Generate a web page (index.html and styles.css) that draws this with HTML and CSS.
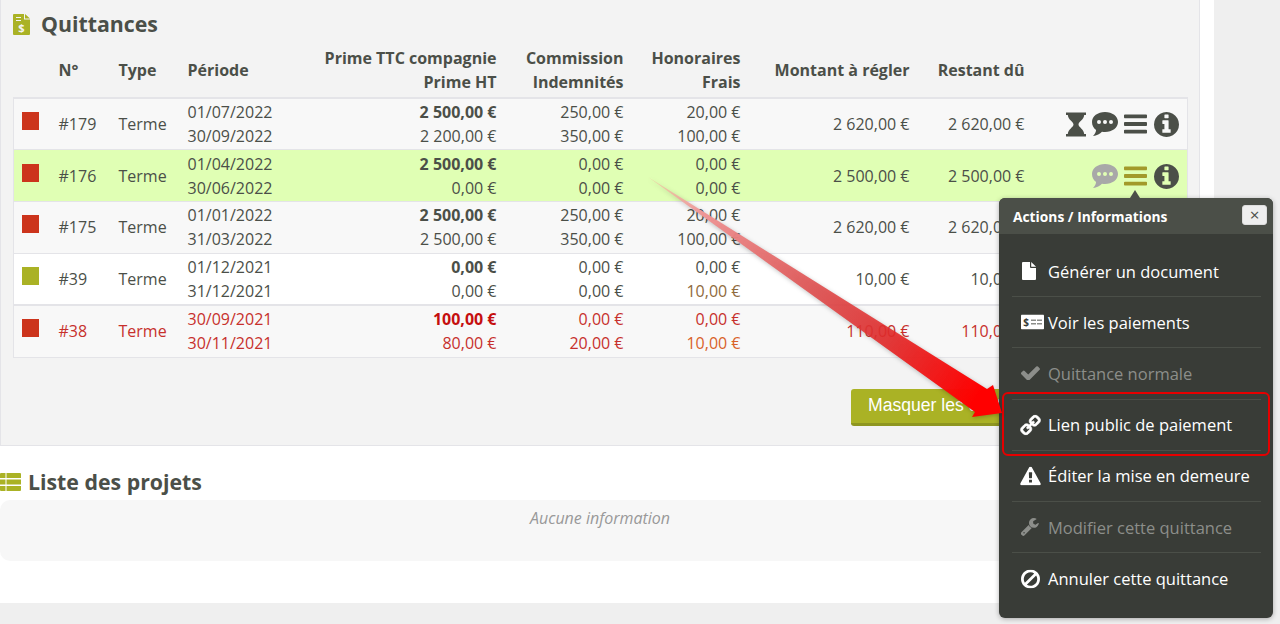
FILE: index.html
```html
<!DOCTYPE html>
<html lang="fr">

<head>
  <meta charset="UTF-8">
  <meta name="viewport" content="width=device-width, initial-scale=1.0">
  <title>Quittances</title>
  <link rel="stylesheet" href="styles.css">
</head>

<body>
  <svg class="sprite" xmlns="http://www.w3.org/2000/svg">
    <symbol id="i-bars" viewBox="128 256 1536 1280"><path d="M1664 1344v128q0 26-19 45t-45 19H192q-26 0-45-19t-19-45v-128q0-26 19-45t45-19h1408q26 0 45 19t19 45zm0-512v128q0 26-19 45t-45 19H192q-26 0-45-19t-19-45V832q0-26 19-45t45-19h1408q26 0 45 19t19 45zm0-512v128q0 26-19 45t-45 19H192q-26 0-45-19t-19-45V320q0-26 19-45t45-19h1408q26 0 45 19t19 45z"/></symbol>
    <symbol id="i-info" viewBox="128 128 1536 1536"><path d="M1152 1376v-160q0-14-9-23t-23-9h-96V672q0-14-9-23t-23-9H672q-14 0-23 9t-9 23v160q0 14 9 23t23 9h96v320h-96q-14 0-23 9t-9 23v160q0 14 9 23t23 9h448q14 0 23-9t9-23zm-128-896V320q0-14-9-23t-23-9H800q-14 0-23 9t-9 23v160q0 14 9 23t23 9h192q14 0 23-9t9-23zm640 416q0 209-103 385.5T1281.5 1561 896 1664t-385.5-103T231 1281.5 128 896t103-385.5T510.5 231 896 128t385.5 103T1561 510.5 1664 896z"/></symbol>
    <symbol id="i-hourglass" viewBox="0 0 20 24"><path d="M0 0h20v2.500h-1.800c-.4 5-5.700 6.800-5.700 9.500s5.300 4.500 5.700 9.500H20V24H0v-2.500h1.800c.4-5 5.700-6.800 5.700-9.500S2.200 7.500 1.800 2.500H0z"/></symbol>
    <symbol id="i-comment" viewBox="0 0 26 24"><path fill-rule="evenodd" d="M13 0c7.200 0 13 4.300 13 10s-5.800 10-13 10c-1 0-2-.1-3-.3C8 21.600 5 23.500 .8 24c1.600-1.500 3-3.300 3.300-6.100C1.500 16.200 0 13.300 0 10 0 4.300 5.800 0 13 0zM7 8.100a2 2 0 1 0 0 4 2 2 0 0 0 0-4zm6 0a2 2 0 1 0 0 4 2 2 0 0 0 0-4zm6 0a2 2 0 1 0 0 4 2 2 0 0 0 0-4z"/></symbol>
    <symbol id="i-file" viewBox="0 0 14 18"><path d="M0 1a1 1 0 0 1 1-1h7v5a1 1 0 0 0 1 1h5v11a1 1 0 0 1-1 1H1a1 1 0 0 1-1-1zM9.200 0c.2.100.4.200.5.400l3.900 3.900c.2.100.3.300.4.500H9.200z"/></symbol>
    <symbol id="i-check" viewBox="128 320 1543 1142"><path d="M1671 566q0 40-28 68l-724 724-136 136q-28 28-68 28t-68-28l-136-136-362-362q-28-28-28-68t28-68l136-136q28-28 68-28t68 28l294 295 656-657q28-28 68-28t68 28l136 136q28 28 28 68z"/></symbol>
    <symbol id="i-link" viewBox="40 -24 1712 1712"><path stroke="#fff" stroke-width="50" d="M1520 1216q0-40-28-68l-208-208q-28-28-68-28-42 0-72 32 3 3 19 18.500t21.500 21.500 15 19 13 25.500 3.500 27.500q0 40-28 68t-68 28q-15 0-27.500-3.500t-25.500-13-19-15-21.500-21.500-18.500-19q-33 31-33 73 0 40 28 68l206 207q27 27 68 27 40 0 68-26l147-146q28-28 28-67zM817 511q0-40-28-68L583 236q-28-28-68-28-39 0-68 27L300 381q-28 28-28 67 0 40 28 68l208 208q27 27 68 27 42 0 72-31-3-3-19-18.500T607.500 680t-15-19-13-25.500T576 608q0-40 28-68t68-28q15 0 27.500 3.500t25.500 13 19 15 21.500 21.500 18.500 19q33-31 33-73zm895 705q0 120-85 203l-147 146q-83 83-203 83-121 0-204-85l-206-207q-83-83-83-203 0-123 88-209l-88-88q-86 88-208 88-120 0-204-84L164 652q-84-84-84-204t85-203L312 99q83-83 203-83 121 0 204 85l206 207q83 83 83 203 0 123-88 209l88 88q86-88 208-88 120 0 204 84l208 208q84 84 84 204z"/></symbol>
    <symbol id="i-warning" viewBox="0 0 1792 1664"><path d="M1024 1375v-190q0-14-9.500-23.500T992 1152H800q-13 0-22.500 9.500T768 1185v190q0 14 9.500 23.500t22.500 9.500h192q13 0 22.500-9.500t9.500-23.500zm-2-374l18-459q0-12-10-19-13-11-24-11H786q-11 0-24 11-10 7-10 21l17 457q0 10 10 16.500t24 6.500h185q14 0 23.500-6.500t10.500-16.500zm-14-934l768 1408q35 63-2 126-17 29-46.500 46t-63.500 17H128q-34 0-63.500-17T18 1601q-37-63-2-126L784 67q17-31 47-49t65-18 65 18 47 49z"/></symbol>
    <symbol id="i-wrench" viewBox="128 128 1598 1643"><path d="M448 1472q0-26-19-45t-45-19-45 19-19 45 19 45 45 19 45-19 19-45zm644-420l-682 682q-37 37-90 37-52 0-91-37l-106-108q-38-36-38-90 0-53 38-91l681-681q39 98 114.500 173.500T1092 1052zm634-435q0 39-23 106-47 134-164.500 217.500T1280 1024q-185 0-316.500-131.500T832 576t131.500-316.500T1280 128q58 0 121.500 16.500T1509 191q16 11 16 28t-16 28l-293 169v224l193 107q5-3 79-48.500t135.500-81 70.500-35.500q15 0 23.500 10t8.500 25z"/></symbol>
    <symbol id="i-ban" viewBox="128 123 1536 1536"><path d="M1440 893q0-161-87-295l-754 753q137 89 297 89 111 0 211.500-43.500T1281 1280t116-174.500 43-212.500zm-999 299l755-754q-135-91-300-91-148 0-273 73T425 619.500 352 893q0 162 89 299zm1223-299q0 157-61 300t-163.500 246-245 164-298.500 61-298.500-61-245-164T189 1193t-61-300 61-299.500T352.500 348t245-164T896 123t298.500 61 245 164T1603 593.500t61 299.500z"/></symbol>
  </svg>

  <div class="page">
    <section class="panel">
      <h2 class="title">
        <svg class="title-icon" viewBox="0 0 17 21">
          <path fill="#aab225" d="M1 0h10v5.500h6V20a1 1 0 0 1-1 1H1a1 1 0 0 1-1-1V1a1 1 0 0 1 1-1zM12 0l5 4.500h-5z"/>
          <path fill="#f3f3f3" d="M3 3h5v1H3zM3 6h5v1H3z"/>
          <text x="8.500" y="18" class="title-icon-sign">$</text>
        </svg>
        Quittances
      </h2>

      <table class="bills">
        <colgroup>
          <col class="col-state">
          <col class="col-num">
          <col class="col-type">
          <col class="col-period">
          <col class="col-prime">
          <col class="col-comm">
          <col class="col-fees">
          <col class="col-amount">
          <col class="col-due">
          <col>
        </colgroup>
        <thead>
          <tr>
            <th></th>
            <th>N°</th>
            <th>Type</th>
            <th>Période</th>
            <th class="num">Prime TTC compagnie<br>Prime HT</th>
            <th class="num">Commission<br>Indemnités</th>
            <th class="num">Honoraires<br>Frais</th>
            <th class="num">Montant à régler</th>
            <th class="num">Restant dû</th>
            <th></th>
          </tr>
        </thead>
        <tbody>
          <tr class="row-grey row-first">
            <td class="state"><span class="swatch swatch-red"></span></td>
            <td>#179</td>
            <td>Terme</td>
            <td>01/07/2022<br>30/09/2022</td>
            <td class="num"><b>2 500,00 €</b><br>2 200,00 €</td>
            <td class="num">250,00 €<br>350,00 €</td>
            <td class="num">20,00 €<br>100,00 €</td>
            <td class="num">2 620,00 €</td>
            <td class="num">2 620,00 €</td>
            <td>
              <div class="actions">
                <svg class="ico ico-hourglass"><use href="#i-hourglass"/></svg>
                <svg class="ico ico-comment"><use href="#i-comment"/></svg>
                <svg class="ico ico-bars"><use href="#i-bars"/></svg>
                <svg class="ico ico-info"><use href="#i-info"/></svg>
              </div>
            </td>
          </tr>
          <tr class="row-active">
            <td class="state"><span class="swatch swatch-red"></span></td>
            <td>#176</td>
            <td>Terme</td>
            <td>01/04/2022<br>30/06/2022</td>
            <td class="num"><b>2 500,00 €</b><br>0,00 €</td>
            <td class="num">0,00 €<br>0,00 €</td>
            <td class="num">0,00 €<br>0,00 €</td>
            <td class="num">2 500,00 €</td>
            <td class="num">2 500,00 €</td>
            <td>
              <div class="actions">
                <svg class="ico ico-comment is-muted"><use href="#i-comment"/></svg>
                <svg class="ico ico-bars is-open"><use href="#i-bars"/></svg>
                <svg class="ico ico-info"><use href="#i-info"/></svg>
              </div>
            </td>
          </tr>
          <tr class="row-grey">
            <td class="state"><span class="swatch swatch-red"></span></td>
            <td>#175</td>
            <td>Terme</td>
            <td>01/01/2022<br>31/03/2022</td>
            <td class="num"><b>2 500,00 €</b><br>2 500,00 €</td>
            <td class="num">250,00 €<br>350,00 €</td>
            <td class="num">20,00 €<br>100,00 €</td>
            <td class="num">2 620,00 €</td>
            <td class="num">2 620,00 €</td>
            <td></td>
          </tr>
          <tr class="row-white">
            <td class="state"><span class="swatch swatch-green"></span></td>
            <td>#39</td>
            <td>Terme</td>
            <td>01/12/2021<br>31/12/2021</td>
            <td class="num"><b>0,00 €</b><br>0,00 €</td>
            <td class="num">0,00 €<br>0,00 €</td>
            <td class="num">0,00 €<br><span class="fee">10,00 €</span></td>
            <td class="num">10,00 €</td>
            <td class="num">10,00 €</td>
            <td></td>
          </tr>
          <tr class="row-grey row-late">
            <td class="state"><span class="swatch swatch-red"></span></td>
            <td>#38</td>
            <td>Terme</td>
            <td>30/09/2021<br>30/11/2021</td>
            <td class="num"><b>100,00 €</b><br>80,00 €</td>
            <td class="num">0,00 €<br>20,00 €</td>
            <td class="num">0,00 €<br><span class="fee">10,00 €</span></td>
            <td class="num">110,00 €</td>
            <td class="num">110,00 €</td>
            <td></td>
          </tr>
        </tbody>
      </table>

      <div class="panel-foot">
        <button class="btn">Masquer les quittances annulées</button>
      </div>
    </section>

    <section class="projects">
      <h2 class="title title-projects">
        <svg class="title-icon-table" viewBox="0 0 21 18">
          <path fill="#aab225" d="M0 1a1 1 0 0 1 1-1h4.500v5H0zM6.500 0H20a1 1 0 0 1 1 1v4H6.500zM0 6.500h5.500v5H0zM6.500 6.500H21v5H6.500zM0 13h5.500v5H1a1 1 0 0 1-1-1zM6.500 13H21v4a1 1 0 0 1-1 1H6.500z"/>
        </svg>
        Liste des projets
      </h2>
      <div class="empty">Aucune information</div>
    </section>
  </div>

  <aside class="popover">
    <header class="popover-head">
      <span>Actions / Informations</span>
      <button class="popover-close">×</button>
    </header>
    <ul class="menu">
      <li class="menu-item"><svg class="menu-ico ico-file"><use href="#i-file"/></svg>Générer un document</li>
      <li class="menu-item">
        <svg class="menu-ico ico-money" viewBox="0 0 23 15">
          <rect width="23" height="15" rx="1" fill="#fff"/>
          <text x="5" y="11.500" class="money-sign">$</text>
          <path fill="#8c8e8a" d="M10 5h5v1.500h-5zM16 5h5v1.500h-5zM10 8.500h5V10h-5zM16 8.500h5V10h-5z"/>
        </svg>Voir les paiements
      </li>
      <li class="menu-item is-disabled"><svg class="menu-ico ico-check"><use href="#i-check"/></svg>Quittance normale</li>
      <li class="menu-item"><svg class="menu-ico ico-link"><use href="#i-link"/></svg>Lien public de paiement</li>
      <li class="menu-item"><svg class="menu-ico ico-warning"><use href="#i-warning"/></svg>Éditer la mise en demeure</li>
      <li class="menu-item is-disabled"><svg class="menu-ico ico-wrench"><use href="#i-wrench"/></svg>Modifier cette quittance</li>
      <li class="menu-item"><svg class="menu-ico ico-ban"><use href="#i-ban"/></svg>Annuler cette quittance</li>
    </ul>
  </aside>

  <div class="popover-tip"></div>
  <div class="highlight"></div>

  <svg class="callout" viewBox="0 0 1280 624">
    <defs>
      <linearGradient id="callout-fill" gradientUnits="userSpaceOnUse" x1="648" y1="177" x2="975" y2="400">
        <stop offset="0" stop-color="#f3c0a0" stop-opacity=".6"/>
        <stop offset=".15" stop-color="#ee9a9a"/>
        <stop offset=".5" stop-color="#e05050" stop-opacity=".9"/>
        <stop offset=".72" stop-color="#e22c2c" stop-opacity=".9"/>
        <stop offset="1" stop-color="#ff0000"/>
      </linearGradient>
    </defs>
    <polygon fill="url(#callout-fill)" points="648,177 987,389 993,385 1002,413 972,417 975,412"/>
  </svg>
</body>

</html>
```

FILE: styles.css
```css
* {
  margin: 0;
  padding: 0;
  box-sizing: border-box;
}

html,
body {
  height: 624px;
  overflow: hidden;
}

body {
  position: relative;
  background-color: #efefef;
  color: #4b4f48;
  font-family: "Open Sans", sans-serif;
  font-size: 16px;
  line-height: 24px;
}

.sprite {
  display: none;
}

.page {
  width: 1214px;
  height: 603px;
  background-color: #fff;
}

.panel {
  width: 1200px;
  height: 446px;
  padding: 0 11px 0 12px;
  background-color: #f3f3f3;
  border: 1px solid #e4e4e8;
  border-top: none;
}

.title {
  display: flex;
  align-items: center;
  gap: 11px;
  height: 46px;
  padding-top: 2px;
  font-size: 21.300px;
  font-weight: 700;
}

.title-icon {
  width: 17px;
  height: 21px;
}

.title-icon-sign {
  fill: #f3f3f3;
  font-family: "Open Sans", sans-serif;
  font-size: 11px;
  font-weight: 700;
  text-anchor: middle;
}

/* table */
.bills {
  width: 1175px;
  table-layout: fixed;
  border-collapse: collapse;
}

.col-state { width: 37px; }
.col-num { width: 60px; }
.col-type { width: 69px; }
.col-period { width: 121px; }
.col-prime { width: 204px; }
.col-comm { width: 127px; }
.col-fees { width: 117px; }
.col-amount { width: 169px; }
.col-due { width: 115px; }

.bills th {
  height: 51px;
  padding: 0 8px 3px;
  font-weight: 700;
  text-align: left;
  white-space: nowrap;
}

.bills td {
  height: 52px;
  padding: 0 8px;
  border-bottom: 1px solid #e4e4e8;
  white-space: nowrap;
}

.bills .row-first td {
  height: 51px;
  padding-top: 1px;
}

.bills .row-active td {
  padding-top: 2px;
}

.bills tbody {
  border: 1px solid #e4e4e8;
  border-top: 2px solid #e4e4e8;
}

.bills th.num,
.bills td.num {
  text-align: right;
}

.bills b {
  font-weight: 700;
}

.row-grey td { background-color: #f8f8f8; }
.row-active td { background-color: #e0ffb4; }
.row-white td { background-color: #fff; }

.row-late td {
  border-top: 2px solid #e4e4e8;
  color: #c7302c;
}

.row-late b { color: #c50f0f; }
.row-late .fee { color: #d9622a; }
.fee { color: #8f6a3c; }

.bills .row-grey td.state,
.bills .row-white td.state {
  padding: 0 0 0 8px;
  vertical-align: top;
}

.bills .row-active td.state {
  padding: 1px 0 0 8px;
  vertical-align: top;
}

.swatch {
  display: block;
  width: 17px;
  height: 18px;
  margin-top: 13px;
}

.swatch-red { background-color: #cc341c; }
.swatch-green { background-color: #aab225; }

.actions {
  display: flex;
  align-items: center;
  justify-content: flex-end;
}

.ico {
  display: block;
  fill: #4b4f48;
}

.ico-hourglass { width: 20px; height: 25px; margin-right: 6px; }
.ico-comment { width: 26px; height: 24px; margin-right: 6px; }
.ico-bars { width: 23px; height: 20px; margin-right: 7px; }
.ico-info { width: 25px; height: 25px; }

.ico.is-muted { fill: #a8a8a8; }
.ico.is-open { fill: #a29a2a; }

.panel-foot {
  padding: 31px 0 0 838px;
}

.btn {
  display: block;
  height: 37px;
  padding: 0 17px;
  background-color: #aab225;
  border: none;
  border-bottom: 3px solid #8e9620;
  border-radius: 3px;
  color: #fff;
  font-family: "Liberation Sans", sans-serif;
  font-size: 17.600px;
  white-space: nowrap;
}

/* projects */
.projects {
  width: 1200px;
}

.title-projects {
  gap: 7px;
  height: 54px;
  padding-top: 17px;
}

.title-icon-table {
  width: 21px;
  height: 18px;
}

.empty {
  height: 61px;
  padding-top: 6px;
  background-color: #f7f7f7;
  border-radius: 10px;
  color: #999;
  font-size: 16px;
  font-style: italic;
  text-align: center;
}

/* popover */
.popover {
  position: absolute;
  top: 198px;
  left: 999px;
  width: 274px;
  height: 420px;
  background-color: #393c37;
  border-radius: 6px;
  box-shadow: 0 1px 5px rgba(0, 0, 0, .3);
  color: #fff;
  overflow: hidden;
}

.popover-head {
  display: flex;
  align-items: center;
  justify-content: space-between;
  height: 36px;
  padding: 1px 6px 0 14px;
  background-color: #4b4f48;
  font-size: 13.800px;
  font-weight: 700;
}

.popover-close {
  width: 25px;
  height: 20px;
  margin-top: -3px;
  background-color: #eee;
  border: 1px solid #ddd;
  border-radius: 3px;
  color: #4b4f48;
  font-family: "Open Sans", sans-serif;
  font-size: 17px;
  line-height: 16px;
}

.popover-tip {
  position: absolute;
  top: 190px;
  left: 1130px;
  width: 0;
  height: 0;
  border-left: 5px solid transparent;
  border-right: 5px solid transparent;
  border-bottom: 8px solid #4b4f48;
}

.menu {
  list-style: none;
  margin: 12px 12px 0 13px;
}

.menu-item {
  position: relative;
  display: flex;
  align-items: center;
  height: 51.200px;
  padding: 1px 0 0 36px;
  border-bottom: 1px solid #4b4f48;
  font-size: 16.500px;
}

.menu-item:last-child {
  border-bottom: none;
}

.menu-item.is-disabled {
  color: #8c8e8a;
}

.menu-ico {
  position: absolute;
  top: 50%;
  fill: #fff;
  transform: translateY(-50%);
}

.is-disabled .menu-ico {
  fill: #8c8e8a;
}

.ico-file { left: 10px; width: 14px; height: 18px; }
.ico-money { left: 9px; width: 23px; height: 15px; }
.ico-check { left: 9px; width: 19px; height: 14px; }
.ico-link { left: 8px; width: 21px; height: 21px; transform: translateY(-50%) scaleX(-1); }
.ico-warning { left: 8px; width: 21px; height: 19px; }
.ico-wrench { left: 9px; width: 18px; height: 18px; }
.ico-ban { left: 9px; width: 19px; height: 19px; }

.money-sign {
  fill: #393c37;
  font-family: "Open Sans", sans-serif;
  font-size: 10px;
  font-weight: 700;
  text-anchor: middle;
}

/* callout over the page */
.highlight {
  position: absolute;
  top: 392px;
  left: 1002px;
  width: 268px;
  height: 64px;
  border: 2px solid #e60000;
  border-radius: 6px;
}

.callout {
  position: absolute;
  top: 0;
  left: 0;
  width: 1280px;
  height: 624px;
  pointer-events: none;
  filter: drop-shadow(0 1px 2px rgba(0, 0, 0, .25));
}
```
